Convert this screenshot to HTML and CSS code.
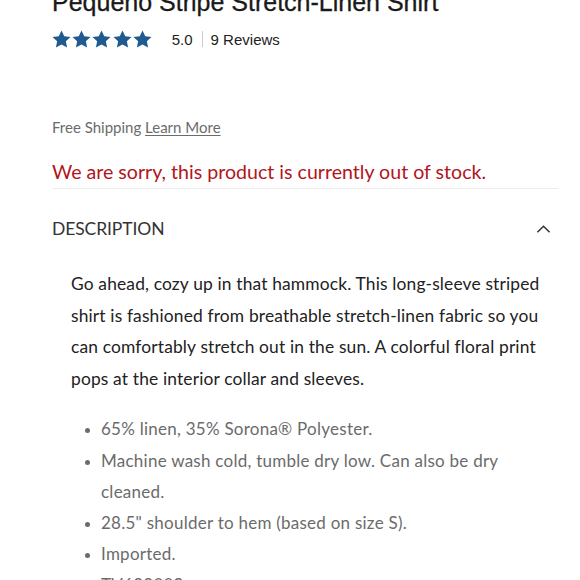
FILE: index.html
```html
<!DOCTYPE html>
<html>
<head>
<meta charset="utf-8">
<link rel="stylesheet" href="styles.css">
</head>
<body>
<main class="product">
  <h1 class="title">Pequeño Stripe Stretch-Linen Shirt</h1>
  <div class="rating">
    <span class="stars">
      <svg viewBox="0 0 20 19" class="star"><path d="M10 0.5l2.9 6.1 6.6 0.8-4.9 4.6 1.3 6.6L10 15.3l-5.9 3.3 1.3-6.6L0.5 7.4l6.6-0.8z"/></svg>
      <svg viewBox="0 0 20 19" class="star"><path d="M10 0.5l2.9 6.1 6.6 0.8-4.9 4.6 1.3 6.6L10 15.3l-5.9 3.3 1.3-6.6L0.5 7.4l6.6-0.8z"/></svg>
      <svg viewBox="0 0 20 19" class="star"><path d="M10 0.5l2.9 6.1 6.6 0.8-4.9 4.6 1.3 6.6L10 15.3l-5.9 3.3 1.3-6.6L0.5 7.4l6.6-0.8z"/></svg>
      <svg viewBox="0 0 20 19" class="star"><path d="M10 0.5l2.9 6.1 6.6 0.8-4.9 4.6 1.3 6.6L10 15.3l-5.9 3.3 1.3-6.6L0.5 7.4l6.6-0.8z"/></svg>
      <svg viewBox="0 0 20 19" class="star"><path d="M10 0.5l2.9 6.1 6.6 0.8-4.9 4.6 1.3 6.6L10 15.3l-5.9 3.3 1.3-6.6L0.5 7.4l6.6-0.8z"/></svg>
    </span>
    <span class="score">5.0</span>
    <span class="divider"></span>
    <span class="reviews">9 Reviews</span>
  </div>
  <p class="shipping">Free Shipping <a href="#" class="learn">Learn More</a></p>
  <p class="stock">We are sorry, this product is currently out of stock.</p>
  <section class="desc">
    <div class="desc-head">
      <h2 class="desc-title">DESCRIPTION</h2>
      <svg class="chevron" viewBox="0 0 16 10"><path d="M1.5 8.5L8 2l6.5 6.5" fill="none" stroke="#333" stroke-width="1.6"/></svg>
    </div>
    <div class="desc-body">
      <p class="lead">Go ahead, cozy up in that hammock. This long-sleeve striped shirt is fashioned from breathable stretch-linen fabric so you can comfortably stretch out in the sun. A colorful floral print pops at the interior collar and sleeves.</p>
      <ul class="facts">
        <li>65% linen, 35% Sorona® Polyester.</li>
        <li>Machine wash cold, tumble dry low. Can also be dry cleaned.</li>
        <li>28.5" shoulder to hem (based on size S).</li>
        <li>Imported.</li>
        <li>TV62200S</li>
      </ul>
    </div>
  </section>
</main>
</body>
</html>
```

FILE: styles.css
```css
html, body {
  margin: 0;
  padding: 0;
  background: #fff;
}
body {
  font-family: "Lato", "Open Sans", sans-serif;
  overflow: hidden;
  height: 580px;
}
.product {
  width: 506px;
  padding-left: 52px;
}
.title {
  font-family: "Liberation Sans", Arial, sans-serif;
  font-weight: 400;
  font-size: 25px;
  line-height: 30px;
  color: #1a1a1a;
  margin: -13px 0 0 0;
  -webkit-text-stroke: 0.3px #1a1a1a;
}
.rating {
  display: flex;
  align-items: center;
  height: 24px;
  margin-top: 10px;
  font-family: "Liberation Sans", Arial, sans-serif;
  font-size: 15px;
  color: #222;
}
.stars {
  display: flex;
  gap: 1.2px;
}
.star {
  width: 19px;
  height: 18px;
  fill: #1f5a91;
}
.score {
  margin-left: 20px;
}
.divider {
  width: 1px;
  height: 16px;
  background: #ccc;
  margin: 0 8px 0 9px;
}
.shipping {
  margin: 66px 0 0 0;
  font-size: 15px;
  line-height: 20px;
  color: #6b6b6b;
}
.learn {
  color: #6b6b6b;
  text-decoration: underline;
  text-underline-offset: 2px;
}
.stock {
  margin: 22px 0 0 0;
  font-size: 19.6px;
  line-height: 26px;
  color: #b2151d;
  padding-bottom: 3px;
  border-bottom: 1px solid #ececec;
}
.desc-head {
  display: flex;
  align-items: center;
  justify-content: space-between;
  height: 79px;
}
.desc-title {
  margin: 0;
  font-size: 17.5px;
  font-weight: 400;
  color: #333;
  letter-spacing: -0.1px;
}
.chevron {
  width: 15px;
  height: 10px;
  margin-right: 7px;
}
.desc-body {
  padding-left: 19px;
  padding-right: 12px;
}
.lead {
  margin: 0;
  font-size: 17.4px;
  line-height: 31.6px;
  letter-spacing: 0.15px;
  color: #222;
}
.facts {
  margin: 19px 0 0 0;
  padding-left: 30px;
  font-size: 17px;
  line-height: 31.2px;
  letter-spacing: 0.25px;
  color: #6b6b6b;
}
.facts li::marker {
  font-size: 14px;
}
```
